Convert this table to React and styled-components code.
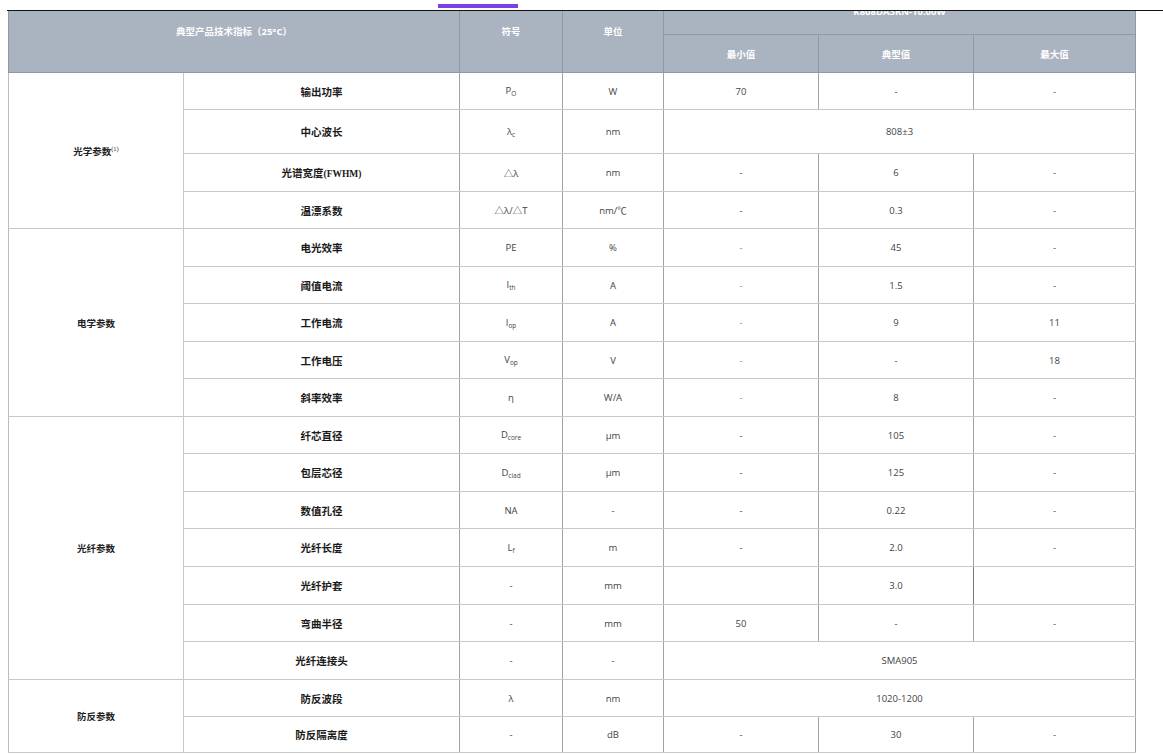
import React from 'react'
import styled, { createGlobalStyle } from 'styled-components'

const GlobalStyle = createGlobalStyle`
  html, body {
    margin: 0;
    padding: 0;
    background: #fff;
  }
  body {
    font-family: 'Open Sans', 'Noto Sans CJK SC', sans-serif;
    overflow: hidden;
  }
`

const TopBar = styled.div`
  position: fixed;
  top: 0;
  left: 7px;
  right: 0;
  height: 10px;
  background: #fff;
  border-bottom: 1px solid #111;
  z-index: 2;
`

const TabMark = styled.span`
  position: absolute;
  left: 431px;
  top: 4px;
  width: 80px;
  height: 4px;
  background: #7b3fe4;
`

const Viewport = styled.div`
  height: 754px;
  overflow: hidden;
  padding: 0 28px 0 8px;
`

const SpecTable = styled.table`
  width: 1127px;
  margin-top: -12px;
  border-collapse: collapse;
  table-layout: fixed;
`

const Th = styled.th`
  background: #aab3c0;
  color: #fff;
  font-family: 'Open Sans', 'Noto Sans CJK SC', sans-serif;
  font-size: 9.5px;
  font-weight: 700;
  text-align: center;
  vertical-align: middle;
  border: 1px solid #8f99a6;
  padding: 0;
`

const HeadRow = styled.tr`
  height: ${p => p.$h}px;
`

const Row = styled.tr`
  height: ${p => p.$h}px;
`

const Td = styled.td`
  border: 1px solid #c8c8c8;
  border-left-color: #a3a3a3;
  border-right-color: #a3a3a3;
  text-align: center;
  vertical-align: middle;
  padding: 0;
  font-family: 'Open Sans', 'Noto Sans CJK SC', sans-serif;
  font-size: 9.5px;
  color: ${p => (p.$tone === 'red' ? '#c96a78' : '#444')};
  ${p => p.$boxed && 'border-left: 1px solid #777; border-right: 1px solid #777;'}
`

const GroupCell = styled(Td)`
  font-family: 'Noto Sans CJK SC', sans-serif;
  font-weight: 700;
  color: #222;
  border-left-color: #bcbcbc;
  border-right-color: #c8c8c8;

  sup {
    font-family: 'Liberation Serif', serif;
    font-size: 6.5px;
    font-weight: 400;
    vertical-align: 4px;
  }
`

const LabelCell = styled(Td)`
  font-family: 'Liberation Serif', 'Noto Sans CJK SC', serif;
  font-size: 10.5px;
  font-weight: 700;
  color: #1a1a1a;
  border-left-color: #c8c8c8;

  small {
    font-size: 9.5px;
  }
`

const Sym = styled.span`
  font-size: 9.5px;

  sub {
    font-size: 6.5px;
    vertical-align: -2px;
  }
`

const groups = [
  {
    name: '光学参数',
    note: '(1)',
    rows: [
      { label: '输出功率', sym: ['P', 'O'], unit: 'W', vals: ['70', '-', '-'], h: 37 },
      { label: '中心波长', sym: ['λ', 'c'], unit: 'nm', span: '808±3', h: 44 },
      { label: '光谱宽度', extra: '(FWHM)', sym: ['△λ'], unit: 'nm', vals: ['-', '6', '-'], h: 38 },
      { label: '温漂系数', sym: ['△λ/△T'], unit: 'nm/℃', vals: ['-', '0.3', '-'], h: 37 },
    ],
  },
  {
    name: '电学参数',
    tone: 'red',
    rows: [
      { label: '电光效率', sym: ['PE'], unit: '%', vals: ['-', '45', '-'], h: 38 },
      { label: '阈值电流', sym: ['I', 'th'], unit: 'A', vals: ['-', '1.5', '-'], h: 37 },
      { label: '工作电流', sym: ['I', 'op'], unit: 'A', vals: ['-', '9', '11'], h: 38 },
      { label: '工作电压', sym: ['V', 'op'], unit: 'V', vals: ['-', '-', '18'], h: 37 },
      { label: '斜率效率', sym: ['η'], unit: 'W/A', vals: ['-', '8', '-'], h: 38 },
    ],
  },
  {
    name: '光纤参数',
    rows: [
      { label: '纤芯直径', sym: ['D', 'core'], unit: 'μm', vals: ['-', '105', '-'], h: 37 },
      { label: '包层芯径', sym: ['D', 'clad'], unit: 'μm', vals: ['-', '125', '-'], h: 38 },
      { label: '数值孔径', sym: ['NA'], unit: '-', vals: ['-', '0.22', '-'], h: 37 },
      { label: '光纤长度', sym: ['L', 'f'], unit: 'm', vals: ['-', '2.0', '-'], h: 38 },
      { label: '光纤护套', sym: ['-'], unit: 'mm', vals: ['', '3.0', ''], h: 38, boxed: true },
      { label: '弯曲半径', sym: ['-'], unit: 'mm', vals: ['50', '-', '-'], h: 37 },
      { label: '光纤连接头', sym: ['-'], unit: '-', span: 'SMA905', h: 38 },
    ],
  },
  {
    name: '防反参数',
    rows: [
      { label: '防反波段', sym: ['λ'], unit: 'nm', span: '1020-1200', h: 37 },
      { label: '防反隔离度', sym: ['-'], unit: 'dB', vals: ['-', '30', '-'], h: 36 },
    ],
  },
]

const colWidths = [175, 276, 103, 101, 155, 155, 162]

const Symbol = ({ parts }) => (
  <Sym>
    {parts[0]}
    {parts[1] && <sub>{parts[1]}</sub>}
  </Sym>
)

const App = () => (
  <>
    <GlobalStyle />
    <TopBar>
      <TabMark />
    </TopBar>
    <Viewport>
      <SpecTable>
        <colgroup>
          {colWidths.map((w, i) => (
            <col key={i} width={w} />
          ))}
        </colgroup>
        <thead>
          <HeadRow $h={46}>
            <Th colSpan={2} rowSpan={2}>典型产品技术指标（25°C）</Th>
            <Th rowSpan={2}>符号</Th>
            <Th rowSpan={2}>单位</Th>
            <Th colSpan={3}>K808DA3RN-10.00W</Th>
          </HeadRow>
          <HeadRow $h={38}>
            <Th>最小值</Th>
            <Th>典型值</Th>
            <Th>最大值</Th>
          </HeadRow>
        </thead>
        <tbody>
          {groups.map(g =>
            g.rows.map((r, i) => (
              <Row key={g.name + r.label} $h={r.h}>
                {i === 0 && (
                  <GroupCell rowSpan={g.rows.length}>
                    {g.name}
                    {g.note && <sup>{g.note}</sup>}
                  </GroupCell>
                )}
                <LabelCell>
                  {r.label}
                  {r.extra && <small>{r.extra}</small>}
                </LabelCell>
                <Td>
                  <Symbol parts={r.sym} />
                </Td>
                <Td>{r.unit}</Td>
                {r.span ? (
                  <Td colSpan={3}>{r.span}</Td>
                ) : (
                  r.vals.map((v, j) => (
                    <Td
                      key={j}
                      $boxed={r.boxed && j === 1}
                      $tone={j === 0 && v === '-' ? g.tone : undefined}
                    >
                      {v}
                    </Td>
                  ))
                )}
              </Row>
            ))
          )}
        </tbody>
      </SpecTable>
    </Viewport>
  </>
)

export default App
